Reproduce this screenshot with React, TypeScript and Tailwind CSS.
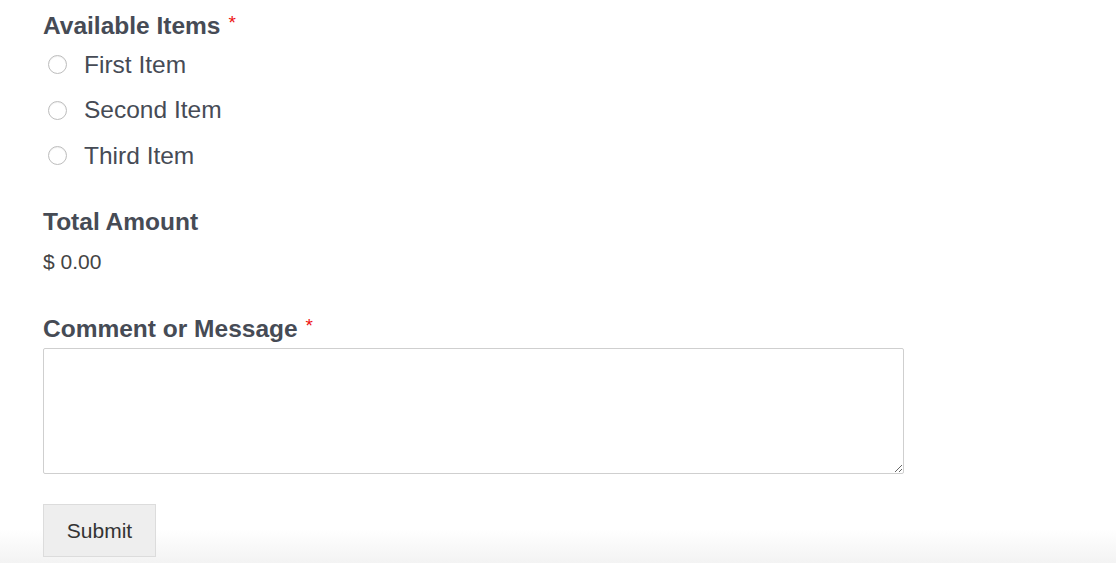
import React from 'react';

const items = ['First Item', 'Second Item', 'Third Item'];

const Required = () => <span className="ml-[8px] align-[5px] text-[19px] font-normal text-[#e11]">*</span>;

export default function App() {
  return (
    <div
      className="min-h-screen bg-[linear-gradient(to_bottom,#ffffff_0%,#ffffff_94%,#f3f3f3_100%)] pl-[43px] pt-[8px] text-[#464b55]"
      style={{ fontFamily: '"Liberation Sans", Arial, sans-serif' }}
    >
      <form className="flex w-[861px] flex-col" onSubmit={(e) => e.preventDefault()}>
        {/* Available Items */}
        <div className="text-[24.5px] font-bold leading-[30px]">
          Available Items
          <Required />
        </div>
        <ul className="mt-[1px]">
          {items.map((item) => (
            <li key={item} className="flex h-[45.5px] items-center">
              <label className="flex items-center">
                <input
                  type="radio"
                  name="items"
                  className="ml-[5px] h-[19px] w-[19px] appearance-none rounded-full border border-[#bdbdbd] bg-white shadow-[inset_0_1px_1px_rgba(0,0,0,0.06)]"
                />
                <span className="ml-[17px] text-[24.5px] leading-[30px]">{item}</span>
              </label>
            </li>
          ))}
        </ul>

        {/* Total Amount */}
        <div className="mt-[28.5px] text-[24.5px] font-bold leading-[30px]">Total Amount</div>
        <div className="mt-[10px] text-[21px] leading-[30px] text-[#444]">$ 0.00</div>

        {/* Comment or Message */}
        <div className="mt-[34px] text-[24.5px] font-bold leading-[30px]">
          Comment or Message
          <Required />
        </div>
        <textarea className="mt-[4px] h-[126px] w-[861px] rounded-[2px] border border-[#cfcfcf] bg-white p-2 text-[18px] outline-none" />

        <div className="mt-[30px]">
          <button
            type="submit"
            className="h-[53px] w-[113px] border border-[#dcdcdc] bg-[#eeeeee] text-[21px] text-[#333]"
          >
            Submit
          </button>
        </div>
      </form>
    </div>
  );
}
